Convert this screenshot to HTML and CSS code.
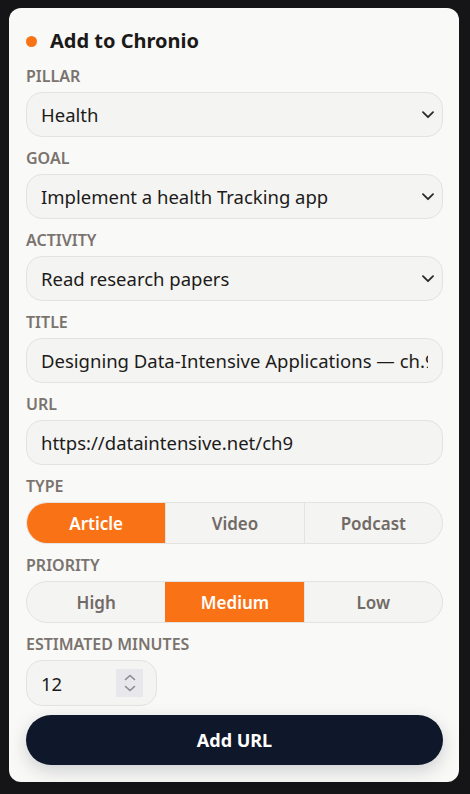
FILE: index.html
```html
<!DOCTYPE html>
<html lang="en">
<head>
<meta charset="utf-8">
<title>Add to Chronio</title>
<link rel="stylesheet" href="styles.css">
</head>
<body>
<main class="card">
  <header class="head">
    <span class="dot"></span>
    <h1 class="title">Add to Chronio</h1>
  </header>

  <div class="field">
    <label class="label">Pillar</label>
    <div class="select"><span class="select-text">Health</span>
      <svg class="chev" viewBox="0 0 12 8" width="12" height="8"><path d="M1 1.2 6 6.2 11 1.2" fill="none" stroke="#2a2a2a" stroke-width="1.8" stroke-linecap="round" stroke-linejoin="round"/></svg>
    </div>
  </div>

  <div class="field">
    <label class="label">Goal</label>
    <div class="select"><span class="select-text">Implement a health Tracking app</span>
      <svg class="chev" viewBox="0 0 12 8" width="12" height="8"><path d="M1 1.2 6 6.2 11 1.2" fill="none" stroke="#2a2a2a" stroke-width="1.8" stroke-linecap="round" stroke-linejoin="round"/></svg>
    </div>
  </div>

  <div class="field">
    <label class="label">Activity</label>
    <div class="select"><span class="select-text">Read research papers</span>
      <svg class="chev" viewBox="0 0 12 8" width="12" height="8"><path d="M1 1.2 6 6.2 11 1.2" fill="none" stroke="#2a2a2a" stroke-width="1.8" stroke-linecap="round" stroke-linejoin="round"/></svg>
    </div>
  </div>

  <div class="field">
    <label class="label">Title</label>
    <input class="input" type="text" value="Designing Data-Intensive Applications — ch.9">
  </div>

  <div class="field">
    <label class="label">URL</label>
    <input class="input" type="text" value="https://dataintensive.net/ch9">
  </div>

  <div class="field">
    <label class="label">Type</label>
    <div class="seg">
      <span class="seg-item active">Article</span>
      <span class="seg-item">Video</span>
      <span class="seg-item">Podcast</span>
    </div>
  </div>

  <div class="field">
    <label class="label">Priority</label>
    <div class="seg">
      <span class="seg-item">High</span>
      <span class="seg-item active">Medium</span>
      <span class="seg-item">Low</span>
    </div>
  </div>

  <div class="field">
    <label class="label">Estimated minutes</label>
    <div class="number">
      <span class="number-value">12</span>
      <span class="spin">
        <svg viewBox="0 0 12 18" width="12" height="18"><path d="M1.5 5.5 6 1.5 10.5 5.5M1.5 12.5 6 16.5 10.5 12.5" fill="none" stroke="#8b8993" stroke-width="1.6" stroke-linecap="round" stroke-linejoin="round"/></svg>
      </span>
    </div>
  </div>

  <button class="submit" type="button">Add URL</button>
</main>
</body>
</html>
```

FILE: styles.css
```css
* { box-sizing: border-box; }
html, body { margin: 0; padding: 0; }
body {
  background: #151517;
  font-family: "Noto Sans", "Open Sans", sans-serif;
  color: #1c1b1a;
  padding: 8px 11px 12px 9px;
}
.card {
  background: #f9f9f7;
  border-radius: 12px;
  padding: 19px 16px 17px 17px;
  display: flex;
  flex-direction: column;
  gap: 12px;
}
.head {
  display: flex;
  align-items: center;
  gap: 13px;
  height: 28px;
}
.dot {
  width: 11px;
  height: 11px;
  border-radius: 50%;
  background: #f97316;
  flex: none;
}
.title {
  margin: 0;
  font-size: 20px;
  font-weight: 700;
  line-height: 28px;
  color: #1c1a19;
}
.field {
  display: flex;
  flex-direction: column;
  gap: 6px;
}
.label {
  font-size: 16px;
  line-height: 19px;
  font-weight: 600;
  text-transform: uppercase;
  color: #7a736e;
}
.select, .input {
  height: 45px;
  border: 1px solid #e4e3e0;
  background: #f4f4f2;
  border-radius: 16px;
  font-family: inherit;
  font-size: 18.5px;
  color: #1c1b1a;
  padding: 0 14px;
}
.select {
  display: flex;
  align-items: center;
  justify-content: space-between;
  padding-right: 8px;
}
.select-text { white-space: nowrap; overflow: hidden; }
.chev { flex: none; }
.input {
  width: 100%;
  outline: none;
}
.seg {
  display: grid;
  grid-template-columns: 1fr 1fr 1fr;
  height: 42px;
  border: 1px solid #e4e3e0;
  border-radius: 21px;
  overflow: hidden;
  background: #f4f4f2;
}
.seg-item {
  display: flex;
  align-items: center;
  justify-content: center;
  font-size: 17px;
  font-weight: 600;
  color: #716a66;
  border-left: 1px solid #e4e3e0;
}
.seg-item:first-child { border-left: none; }
.seg-item.active {
  background: #f97316;
  color: #ffffff;
  border-left-color: #f97316;
}
.number {
  width: 131px;
  height: 46px;
  border: 1px solid #e4e3e0;
  background: #f4f4f2;
  border-radius: 16px;
  display: flex;
  align-items: center;
  justify-content: space-between;
  padding: 0 13px 0 14px;
  font-size: 18.5px;
}
.spin {
  width: 27px;
  height: 28px;
  background: #e8e7ec;
  display: flex;
  align-items: center;
  justify-content: center;
}
.submit {
  margin-top: -3px;
  height: 50px;
  border: none;
  border-radius: 25px;
  background: #0f172a;
  color: #ffffff;
  font-family: inherit;
  font-size: 18px;
  font-weight: 700;
  box-shadow: 0 6px 18px rgba(15, 23, 42, 0.18);
  cursor: pointer;
}
```
